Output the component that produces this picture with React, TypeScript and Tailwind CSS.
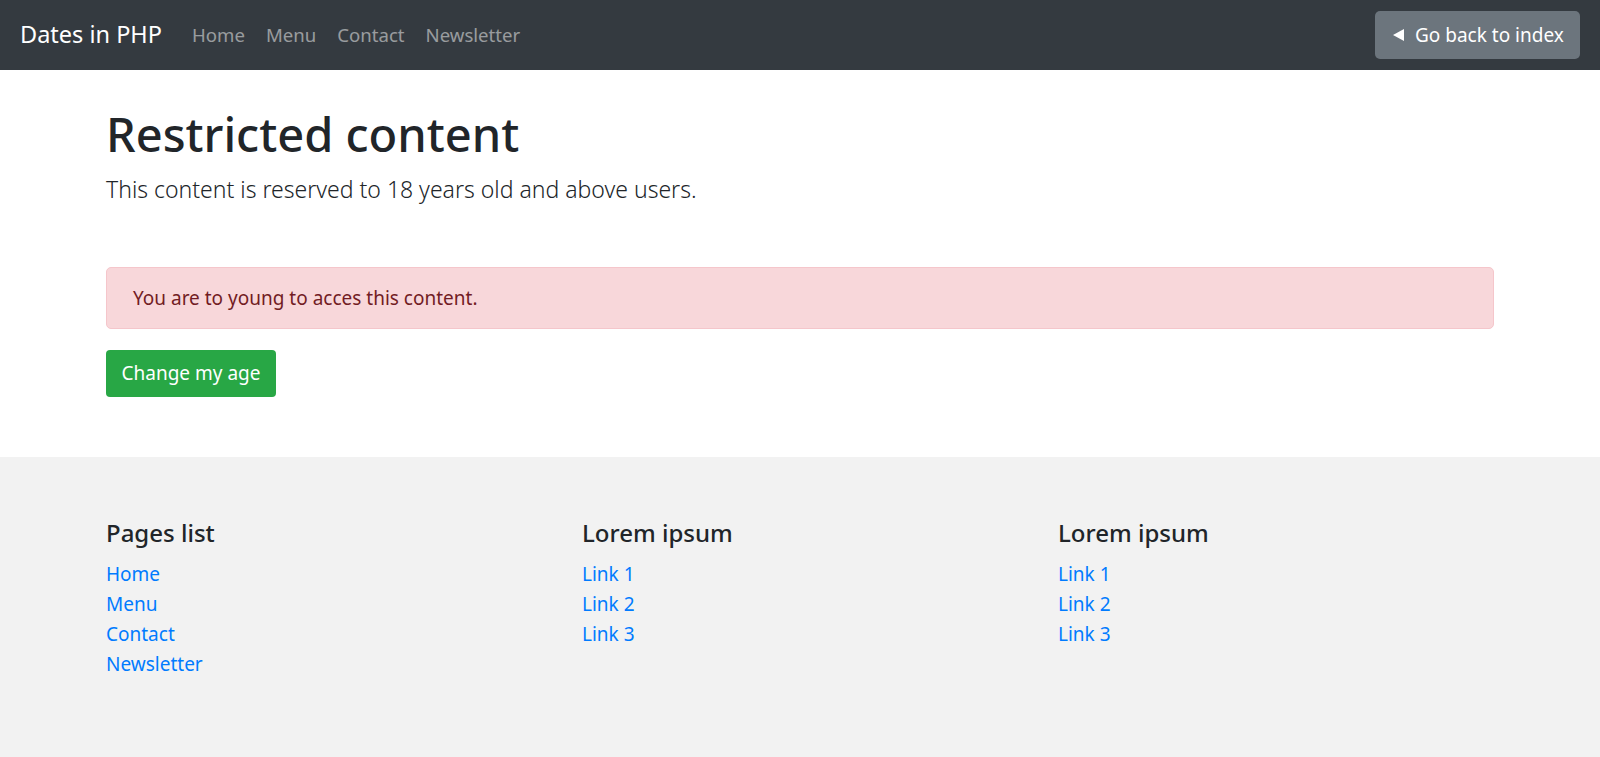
import { Fragment } from 'react';

const navLinks = ['Home', 'Menu', 'Contact', 'Newsletter'];

const footerCols = [
  { title: 'Pages list', links: ['Home', 'Menu', 'Contact', 'Newsletter'] },
  { title: 'Lorem ipsum', links: ['Link 1', 'Link 2', 'Link 3'] },
  { title: 'Lorem ipsum', links: ['Link 1', 'Link 2', 'Link 3'] },
];

export default function App() {
  return (
    <div className="min-h-[757px] flex flex-col bg-white text-[#212529] font-['Noto_Sans',sans-serif]">
      {/* Navbar */}
      <nav className="h-[70px] bg-[#343a40] flex items-center justify-between px-[20px]">
        <div className="flex items-center">
          <a href="#" className="text-white text-[23.5px] leading-none mr-[30px]">Dates in PHP</a>
          <ul className="flex items-center gap-[21px]">
            {navLinks.map((l) => (
              <li key={l}>
                <a href="#" className="text-[18.6px] text-white/50 hover:text-white/75">{l}</a>
              </li>
            ))}
          </ul>
        </div>
        <a
          href="#"
          className="h-[48px] w-[205px] flex items-center pl-[18px] gap-[11px] rounded-[5px] bg-[#6c757d] text-white text-[19px]"
        >
          <svg width="11" height="12" viewBox="0 0 11 12" className="fill-white">
            <path d="M0 6 L11 0 L11 12 Z" />
          </svg>
          <span>Go back to index</span>
        </a>
      </nav>

      {/* Main */}
      <main className="mx-[106px] pt-[34px] pb-[60px]">
        <h1 className="text-[47px] font-medium leading-[60px]">Restricted content</h1>
        <p className="text-[23px] font-light leading-[1.5] mt-[8px]">
          This content is reserved to 18 years old and above users.
        </p>

        <div className="mt-[60px] rounded-[5px] border border-[#f5c6cb] bg-[#f8d7da] text-[#721c24] text-[19px] leading-[30px] py-[15px] px-[26px]">
          You are to young to acces this content.
        </div>

        <button className="mt-[21px] h-[47px] w-[170px] rounded-[4px] bg-[#28a745] text-white text-[19px]">
          Change my age
        </button>
      </main>

      {/* Footer */}
      <footer className="flex-1 bg-[#f2f2f2] pt-[62px] pb-[80px]">
        <div className="mx-[106px] grid grid-cols-[476px_476px_1fr]">
          {footerCols.map((col, i) => (
            <Fragment key={i}>
              <div>
                <h4 className="text-[24px] font-medium leading-[1.2] mb-[12px]">{col.title}</h4>
                <ul>
                  {col.links.map((l, j) => (
                    <li key={j}>
                      <a href="#" className="text-[19px] leading-[30px] text-[#007bff] hover:underline">{l}</a>
                    </li>
                  ))}
                </ul>
              </div>
            </Fragment>
          ))}
        </div>
      </footer>
    </div>
  );
}
